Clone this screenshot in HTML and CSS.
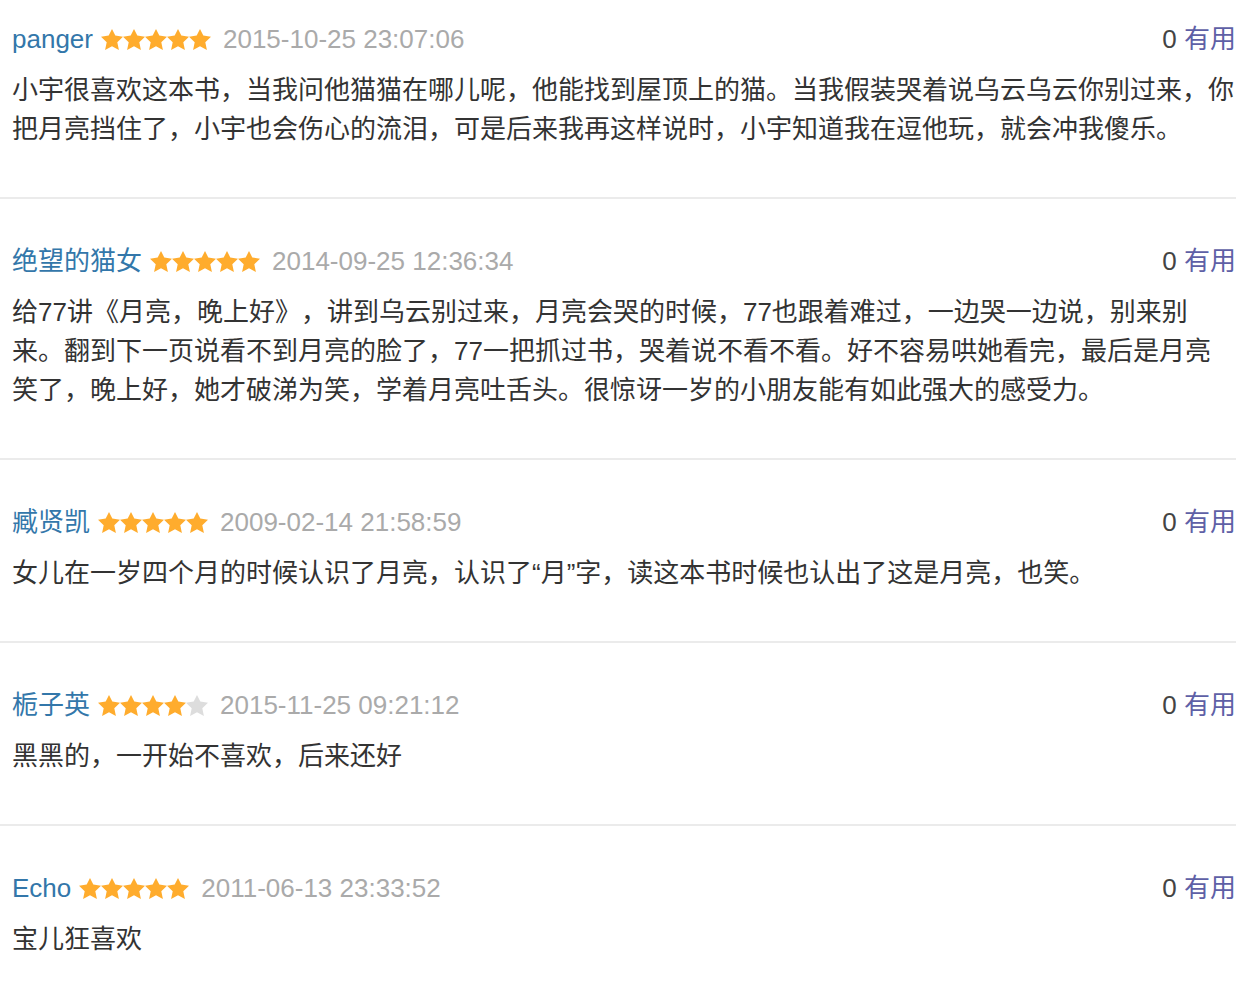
FILE: index.html
```html
<!DOCTYPE html>
<html lang="zh-CN">
<head>
<meta charset="utf-8">
<title>评论</title>
<link rel="stylesheet" href="styles.css">
</head>
<body>
<svg class="defs" width="0" height="0" aria-hidden="true">
  <defs>
    <symbol id="star" viewBox="0 0 22 21">
      <polygon points="11,0 14.3,6.5 22,7.8 16.3,13.2 17.9,21 11,17.3 4.1,21 5.7,13.2 0,7.8 7.7,6.5"/>
    </symbol>
  </defs>
</svg>
<div class="reviews">
  <div class="review">
    <div class="review-head">
      <div class="meta">
        <a class="user">panger</a>
        <svg class="stars" width="110" height="21" viewBox="0 0 110 21"><use href="#star" x="0" width="22" height="21" class="on"/><use href="#star" x="22" width="22" height="21" class="on"/><use href="#star" x="44" width="22" height="21" class="on"/><use href="#star" x="66" width="22" height="21" class="on"/><use href="#star" x="88" width="22" height="21" class="on"/></svg>
        <span class="date">2015-10-25 23:07:06</span>
      </div>
      <div class="useful"><span class="count">0</span> <a class="vote">有用</a></div>
    </div>
    <p class="content">小宇很喜欢这本书，当我问他猫猫在哪儿呢，他能找到屋顶上的猫。当我假装哭着说乌云乌云你别过来，你把月亮挡住了，小宇也会伤心的流泪，可是后来我再这样说时，小宇知道我在逗他玩，就会冲我傻乐。</p>
  </div>
  <div class="review">
    <div class="review-head">
      <div class="meta">
        <a class="user">绝望的猫女</a>
        <svg class="stars" width="110" height="21" viewBox="0 0 110 21"><use href="#star" x="0" width="22" height="21" class="on"/><use href="#star" x="22" width="22" height="21" class="on"/><use href="#star" x="44" width="22" height="21" class="on"/><use href="#star" x="66" width="22" height="21" class="on"/><use href="#star" x="88" width="22" height="21" class="on"/></svg>
        <span class="date">2014-09-25 12:36:34</span>
      </div>
      <div class="useful"><span class="count">0</span> <a class="vote">有用</a></div>
    </div>
    <p class="content">给77讲《月亮，晚上好》，讲到乌云别过来，月亮会哭的时候，77也跟着难过，一边哭一边说，别来别来。翻到下一页说看不到月亮的脸了，77一把抓过书，哭着说不看不看。好不容易哄她看完，最后是月亮笑了，晚上好，她才破涕为笑，学着月亮吐舌头。很惊讶一岁的小朋友能有如此强大的感受力。</p>
  </div>
  <div class="review">
    <div class="review-head">
      <div class="meta">
        <a class="user">臧贤凯</a>
        <svg class="stars" width="110" height="21" viewBox="0 0 110 21"><use href="#star" x="0" width="22" height="21" class="on"/><use href="#star" x="22" width="22" height="21" class="on"/><use href="#star" x="44" width="22" height="21" class="on"/><use href="#star" x="66" width="22" height="21" class="on"/><use href="#star" x="88" width="22" height="21" class="on"/></svg>
        <span class="date">2009-02-14 21:58:59</span>
      </div>
      <div class="useful"><span class="count">0</span> <a class="vote">有用</a></div>
    </div>
    <p class="content">女儿在一岁四个月的时候认识了月亮，认识了“月”字，读这本书时候也认出了这是月亮，也笑。</p>
  </div>
  <div class="review">
    <div class="review-head">
      <div class="meta">
        <a class="user">栀子英</a>
        <svg class="stars" width="110" height="21" viewBox="0 0 110 21"><use href="#star" x="0" width="22" height="21" class="on"/><use href="#star" x="22" width="22" height="21" class="on"/><use href="#star" x="44" width="22" height="21" class="on"/><use href="#star" x="66" width="22" height="21" class="on"/><use href="#star" x="88" width="22" height="21" class="off"/></svg>
        <span class="date">2015-11-25 09:21:12</span>
      </div>
      <div class="useful"><span class="count">0</span> <a class="vote">有用</a></div>
    </div>
    <p class="content">黑黑的，一开始不喜欢，后来还好</p>
  </div>
  <div class="review last">
    <div class="review-head">
      <div class="meta">
        <a class="user">Echo</a>
        <svg class="stars" width="110" height="21" viewBox="0 0 110 21"><use href="#star" x="0" width="22" height="21" class="on"/><use href="#star" x="22" width="22" height="21" class="on"/><use href="#star" x="44" width="22" height="21" class="on"/><use href="#star" x="66" width="22" height="21" class="on"/><use href="#star" x="88" width="22" height="21" class="on"/></svg>
        <span class="date">2011-06-13 23:33:52</span>
      </div>
      <div class="useful"><span class="count">0</span> <a class="vote">有用</a></div>
    </div>
    <p class="content">宝儿狂喜欢</p>
  </div>
</div>
</body>
</html>
```

FILE: styles.css
```css
html, body {
  margin: 0;
  padding: 0;
  background: #ffffff;
}

body {
  font-family: "Liberation Sans", "Noto Sans CJK SC", sans-serif;
  font-size: 26px;
  line-height: 39px;
  color: #333333;
  text-spacing-trim: space-all;
}

.defs {
  position: absolute;
  width: 0;
  height: 0;
  overflow: hidden;
}

.reviews {
  width: 1236px;
}

.review {
  padding: 43px 0 48px 12px;
  border-bottom: 2px solid #ebebeb;
}

.review:first-child {
  padding-top: 20px;
}

.review.last {
  border-bottom: none;
}

.review-head {
  display: flex;
  justify-content: space-between;
  align-items: center;
  height: 39px;
}

.meta {
  display: flex;
  align-items: center;
  white-space: nowrap;
}

.user {
  color: #3377aa;
  text-decoration: none;
}

.stars {
  display: block;
  margin-left: 8px;
  margin-top: -1px;
}

.stars .on {
  fill: #ffac2d;
}

.stars .off {
  fill: #dddddd;
}

.date {
  margin-left: 12px;
  color: #aaaaaa;
}

.useful {
  white-space: nowrap;
  color: #444444;
}

.vote {
  color: #5e60a6;
  text-decoration: none;
}

.content {
  margin: 12px 0 0 0;
  color: #333333;
}
```
